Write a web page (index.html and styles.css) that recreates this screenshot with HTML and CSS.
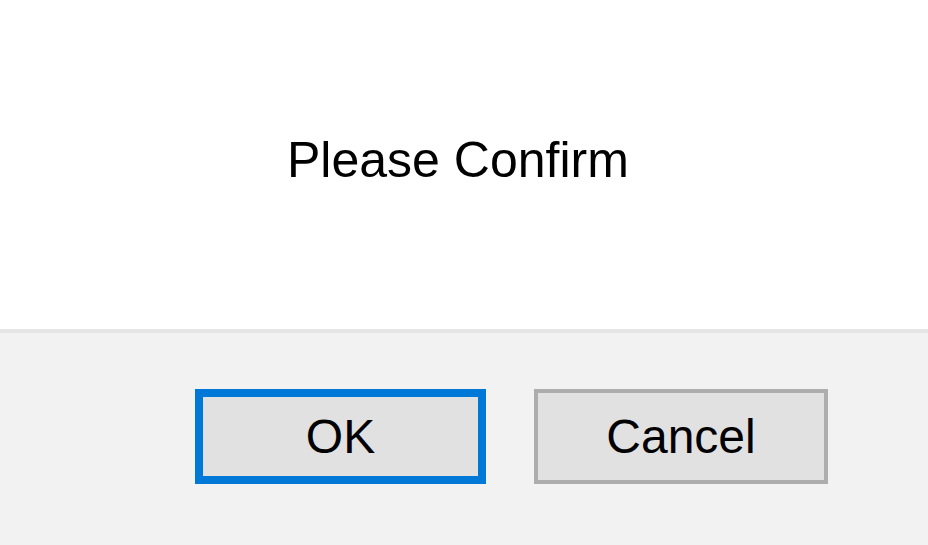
FILE: index.html
```html
<!DOCTYPE html>
<html lang="en">
<head>
<meta charset="utf-8">
<title>Please Confirm</title>
<link rel="stylesheet" href="styles.css">
</head>
<body>
<div class="dialog">
  <div class="content">
    <p class="message">Please Confirm</p>
  </div>
  <div class="footer">
    <button class="btn btn-default" type="button">OK</button>
    <button class="btn" type="button">Cancel</button>
  </div>
</div>
</body>
</html>
```
FILE: styles.css
```css
html, body {
  margin: 0;
  padding: 0;
  width: 928px;
  height: 545px;
  overflow: hidden;
  background: #ffffff;
}

.dialog {
  display: flex;
  flex-direction: column;
  width: 928px;
  height: 545px;
  font-family: "Liberation Sans", Arial, sans-serif;
  color: #000000;
}

.content {
  height: 329px;
  background: #ffffff;
  box-sizing: border-box;
  padding: 131px 0 0 287px;
}

.message {
  margin: 0;
  font-size: 50px;
  line-height: 58px;
}

.footer {
  flex: 1;
  display: flex;
  gap: 48px;
  align-items: flex-start;
  background: #f2f2f2;
  border-top: 4px solid #e5e5e5;
  padding: 56px 0 0 195px;
}

.btn {
  display: flex;
  align-items: center;
  justify-content: center;
  box-sizing: border-box;
  width: 294px;
  height: 95px;
  margin: 0;
  padding: 0;
  background: #e1e1e1;
  border: 4px solid #adadad;
  border-radius: 0;
  font-family: "Liberation Sans", Arial, sans-serif;
  font-size: 48px;
  line-height: 58px;
  color: #000000;
}

.btn-default {
  width: 291px;
  border: 8px solid #0078d7;
}
```
